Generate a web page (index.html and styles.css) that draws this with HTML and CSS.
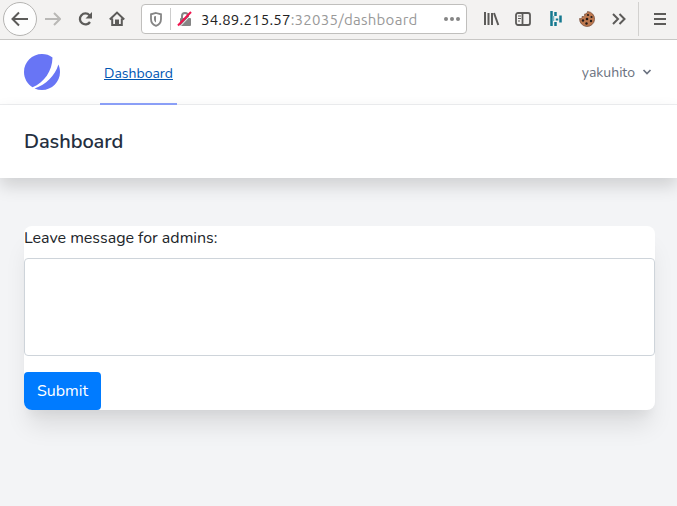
FILE: index.html
```html
<!DOCTYPE html>
<html lang="en">
<head>
<meta charset="utf-8">
<title>Dashboard</title>
<link rel="stylesheet" href="styles.css">
</head>
<body>
<div class="toolbar">
  <div class="back"><svg width="20" height="20" viewBox="0 0 20 20"><path d="M18 10H3M9 3.5L2.5 10 9 16.5"/></svg></div>
  <svg class="forward" width="16" height="16" viewBox="0 0 16 16"><path d="M0 8h14M9 2l6 6-6 6"/></svg>
  <svg class="reload" width="16" height="16" viewBox="0 0 16 16"><path d="M12.500 4.200A5.500 5.500 0 1 0 13 11"/><path class="solid" d="M15 1v6.500H8.500z"/></svg>
  <svg class="home" width="16" height="16" viewBox="0 0 16 16"><path d="M.8 8.500L8 1.600l7.200 6.900M3.200 7.500V14h9.600V7.500"/><path class="solid" d="M6 8.500h4V14H6z"/></svg>
  <div class="address">
    <svg class="shield" width="14" height="15" viewBox="0 0 14 15"><path d="M7 1l5 1.300V7c0 3.500-2 5.700-5 6.800C4 12.700 2 10.500 2 7V2.300z"/><path class="solid" d="M7 4v6.500C5.500 9.700 5 8.500 5 7V4.500z"/></svg>
    <span class="divider"></span>
    <svg class="lock" width="16" height="16" viewBox="0 0 16 16"><path d="M5 8V5a3 3 0 0 1 6 0v3"/><rect x="3" y="7" width="11" height="8" rx="1"/><path class="gap" d="M2.500 16L15.500 2.500"/><path class="slash" d="M1 14.500L14 1"/></svg>
    <span class="url"><b>34.89.215.57</b>:32035/dashboard</span>
    <svg class="dots" width="18" height="4" viewBox="0 0 18 4"><circle cx="3" cy="2" r="2"/><circle cx="9" cy="2" r="2"/><circle cx="15" cy="2" r="2"/></svg>
  </div>
  <svg class="library" width="16" height="14" viewBox="0 0 16 14"><path d="M1 0v13M4.500 1v12M8 1v12M10 1l4.300 12"/></svg>
  <svg class="sidebar" width="16" height="14" viewBox="0 0 16 14"><rect x="1" y="1" width="14" height="12" rx="2"/><path d="M7.500 1v12"/><path class="thin" d="M3 4h3M3 6.500h3M3 9h2"/></svg>
  <svg class="addon" width="12" height="16" viewBox="0 0 12 16"><path d="M1.500 0v15M5.500 1v4M5.500 11v4M7 7.500v2M10.500 4.500v7"/><path class="light" d="M3.500 5v5"/></svg>
  <svg class="cookie" width="16" height="16" viewBox="0 0 16 16"><path class="dough" d="M8.500 .500A7.500 7.500 0 1 1 .6 7.500C2.500 8 3.500 7 3 5.500 5 6 6.500 4.500 5.500 3 7 3.300 8.500 2 8.500.500z"/><g><circle cx="9" cy="4" r="1.100"/><circle cx="12.500" cy="6" r="1.100"/><circle cx="8" cy="8" r="1.300"/><circle cx="4" cy="9.500" r="1.200"/><circle cx="12" cy="10" r="1.200"/><circle cx="7.500" cy="12.500" r="1.200"/></g></svg>
  <svg class="more" width="14" height="12" viewBox="0 0 14 12"><path d="M1 1l5 5-5 5M7.500 1l5 5-5 5"/></svg>
  <span class="separator"></span>
  <svg class="menu" width="12" height="12" viewBox="0 0 12 12"><path d="M0 1h12M0 6h12M0 11h12"/></svg>
</div>
<nav class="nav">
  <svg class="logo" width="36" height="36" viewBox="0 0 48 48"><path d="M11.395 44.428C4.557 40.198 0 32.632 0 24 0 10.745 10.745 0 24 0a23.891 23.891 0 0 1 13.997 4.502c-.2 17.907-11.097 33.245-26.602 39.926z"/><path d="M14.134 45.885A23.914 23.914 0 0 0 24 48c13.255 0 24-10.745 24-24 0-3.516-.756-6.856-2.115-9.866-4.659 15.143-16.608 27.092-31.750 31.751z"/></svg>
  <a class="tab" href="#"><span>Dashboard</span></a>
  <div class="user"><span>yakuhito</span><svg width="10" height="8" viewBox="0 0 10 8"><path d="M1.500 2L5 5.500 8.500 2"/></svg></div>
</nav>
<header class="heading"><h2>Dashboard</h2></header>
<main>
  <form class="card">
    <label for="message">Leave message for admins:</label>
    <textarea id="message"></textarea>
    <button type="button"><span>Submit</span></button>
  </form>
</main>
</body>
</html>
```
FILE: styles.css
```css
* { box-sizing: border-box; }
body { margin: 0; height: 506px; overflow: hidden; background: #f3f4f6; color: #212529; font-family: Nunito, Lato, sans-serif; }
svg { display: block; flex: none; fill: none; stroke: #5c5b59; stroke-width: 2; }
.toolbar { display: flex; align-items: center; height: 40px; padding-bottom: 1px; background: #f3f2f1; border-bottom: 1px solid #c8c7c5; }
.back { width: 34px; height: 34px; margin-left: 3px; border: 1px solid #b5b4b2; border-radius: 50%; background: #fdfdfd; display: flex; align-items: center; justify-content: center; flex: none; }
.forward { margin-left: 8px; stroke: #b9b8b6; }
.reload { margin-left: 16px; stroke-width: 2.300; }
.home { margin-left: 16px; }
.solid { fill: #5c5b59; stroke: none; }
.address { display: flex; align-items: center; width: 326px; height: 30px; margin-left: 16px; border: 1px solid #c0bfbd; border-radius: 4px; background: #fff; flex: none; }
.shield { margin-left: 7px; stroke: #858585; stroke-width: 1.800; }
.shield .solid { fill: #858585; }
.divider { width: 1px; height: 22px; margin-left: 7px; background: #ccc; }
.lock { margin-left: 6px; stroke: #858585; }
.lock rect { fill: #858585; stroke: none; }
.lock .gap { stroke: #fff; stroke-width: 1; }
.lock .slash { stroke: #f0134d; }
.url { width: 236px; margin-left: 8px; padding-top: 2px; font: 15px/22px Ubuntu, "Noto Sans", sans-serif; letter-spacing: .27px; color: #999; white-space: nowrap; }
.url b { font-weight: 400; letter-spacing: .2px; color: #222; }
.dots { margin-left: 6px; fill: #858585; stroke: none; }
.library { margin-left: 17px; }
.sidebar { margin-left: 15px; stroke-width: 1.800; }
.sidebar .thin { stroke-width: 1; }
.addon { margin-left: 19px; stroke: #15788f; stroke-width: 2.500; }
.addon .light { stroke: #79b9c7; stroke-width: 1.500; }
.cookie { margin-left: 17px; stroke: none; fill: #231b19; }
.cookie .dough { fill: #bd784e; stroke: #704633; stroke-width: .7; }
.more { margin-left: 17px; }
.separator { width: 1px; height: 34px; margin-left: 12px; background: #d2d1cf; }
.menu { margin-left: 15px; }
.nav { display: flex; align-items: center; height: 65px; padding: 0 24px; background: #fff; border-bottom: 1px solid #eeeff1; }
.logo { fill: #6875f5; stroke: none; }
.tab { display: flex; align-items: center; align-self: stretch; width: 77px; height: 65px; margin-left: 40px; padding: 2px 4px 0; border-bottom: 2px solid #8da2fb; color: #0056b3; font-size: 14px; line-height: 20px; }
.tab span { padding-top: 2px; }
.user { display: flex; align-items: center; margin-left: auto; padding-right: 1px; color: #6b7280; font-size: 14px; }
.user svg { margin-left: 7px; stroke: #6b7280; stroke-width: 1.700; }
.heading { position: relative; display: flex; align-items: center; height: 73px; padding: 0 24px; background: #fff; box-shadow: 0 8px 16px rgba(0, 0, 0, .15); }
h2 { margin: 0; color: #252f3f; font-size: 20px; line-height: 24px; font-weight: 600; letter-spacing: -.08px; }
main { padding: 48px 22px 0 24px; }
.card { display: flex; flex-direction: column; align-items: flex-start; height: 184px; border-radius: 8px; overflow: hidden; background: #fff; box-shadow: 0 20px 25px -5px rgba(0, 0, 0, .1), 0 10px 10px -5px rgba(0, 0, 0, .04); }
label { height: 32px; font-size: 16px; line-height: 24px; letter-spacing: -.02px; }
textarea { display: block; width: 100%; height: 98px; margin: 0; padding: 6px 12px; border: 1px solid #ced4da; border-radius: 4px; background: #fff; resize: none; }
button { width: 77px; height: 38px; margin-top: 16px; padding: 0; border: 0; border-radius: 4px; background: #007bff; color: #fff; font: 16px/24px Nunito, Lato, sans-serif; }
```
